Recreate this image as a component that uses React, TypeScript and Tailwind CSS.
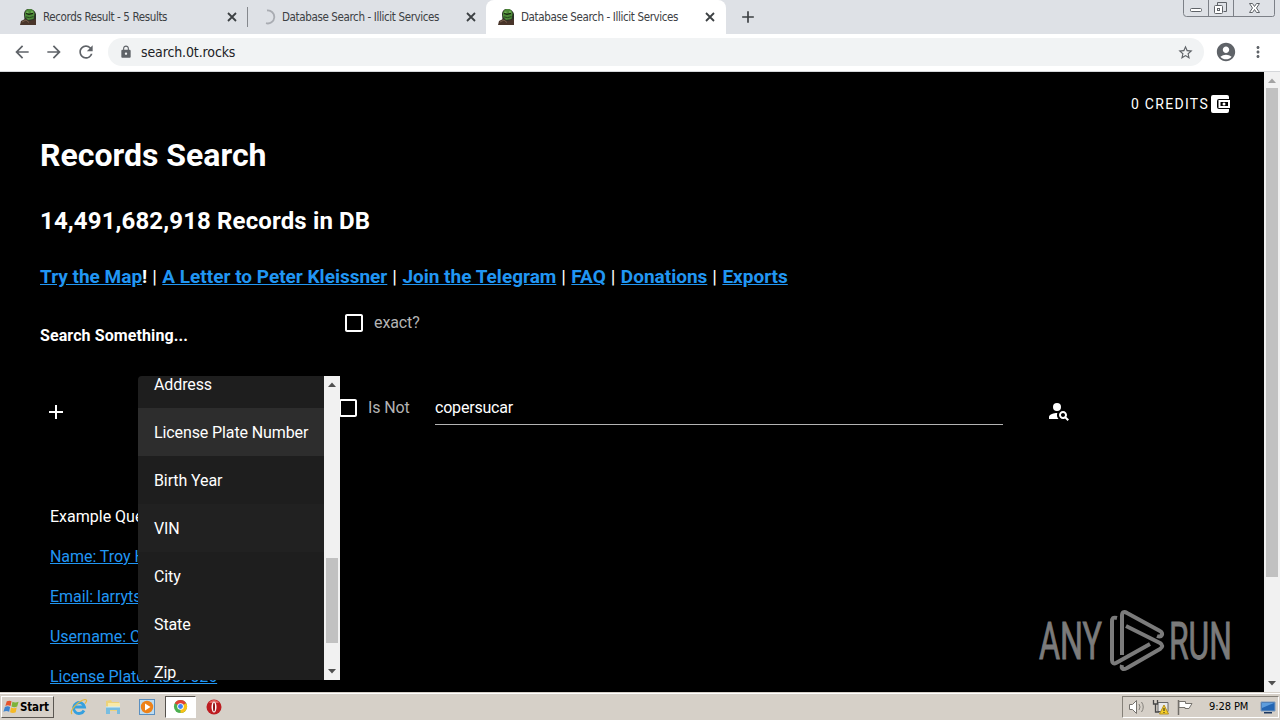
import React from 'react';
import {
    MdAccountCircle,
    MdAdd,
    MdArrowBack,
    MdArrowForward,
    MdCheckBoxOutlineBlank,
    MdLock,
    MdMoreVert,
    MdPersonSearch,
    MdRefresh,
    MdStarBorder,
} from 'react-icons/md';
import { clsx } from 'clsx';

const links = ['A Letter to Peter Kleissner', 'Join the Telegram', 'FAQ', 'Donations', 'Exports'];
const examples = ['Name: Troy H', 'Email: larryts', 'Username: C', 'License Plate: RJC7526'];
const fields = ['Address', 'License Plate Number', 'Birth Year', 'VIN', 'City', 'State', 'Zip'];

function FrogIcon() {
    return (
        <svg viewBox="0 0 16 16" className="h-4 w-4 shrink-0">
            <path d="M4 5.500C4 2 6 0 9 0c3.500 0 6 1.500 7 5v11H5z" fill="#2b3327" />
            <path d="M5 4.500C5 2 7 0 9.500 0c3 0 4.500 1.500 5 4.500L13.500 10 8 11 5 8z" fill="#4c8a38" />
            <path d="M6 4.500l3 .8 4-1" stroke="#17240f" strokeWidth="1.200" fill="none" />
            <path d="M6.500 3.200h2M11 3h2" stroke="#8bc66b" />
            <path d="M5.500 7.800l4 .8 4-1" stroke="#23451d" fill="none" />
            <path d="M0 16l1-4 4-2 4 2 7-2v6z" fill="#49352a" />
            <path d="M2 13l4-2 3 2.500" stroke="#79604c" fill="none" />
        </svg>
    );
}

function Spinner() {
    return (
        <svg viewBox="0 0 16 16" className="h-4 w-4 shrink-0" fill="none" stroke="#a9acb2" strokeWidth="1.800">
            <path d="M7 1.500a6.500 6.500 0 1 1-1 12.700" />
        </svg>
    );
}

function Tab({ title, active, loading }: { title: string; active?: boolean; loading?: boolean }) {
    return (
        <div
            className={clsx(
                'flex h-[34px] shrink-0 items-center pl-[12px]',
                !active && !loading && 'w-[239px] pr-[7px]',
                loading && 'w-[238px] pr-[7px]',
                active && 'w-[240px] rounded-t-lg bg-white pr-[8px]'
            )}
        >
            {loading ? <Spinner /> : <FrogIcon />}
            <span
                className={clsx(
                    "mt-[2px] flex-1 text-[11.500px] whitespace-nowrap tracking-[-0.370px] text-[#3c4043] [font-family:'DejaVu_Sans_Condensed','DejaVu_Sans',sans-serif] [font-stretch:condensed]",
                    loading ? 'ml-[6px]' : 'ml-[7px]'
                )}
            >
                {title}
            </span>
            <svg viewBox="0 0 14 14" className="mr-[1px] h-[14px] w-[14px]" stroke="#3c4043" strokeWidth="1.800">
                <path d="M3 3l8 8M11 3l-8 8" />
            </svg>
        </div>
    );
}

function WindowButtons() {
    return (
        <svg viewBox="0 0 94 18" className="h-[18px] w-[94px] shrink-0 self-start" fill="none">
            <path d="M.5 0v13.500a3 3 0 0 0 3 3h86a2 2 0 0 0 2-2V0M25.500 0v16M50.500 0v16" stroke="#7c8087" />
            <rect x="7.500" y="8.500" width="11" height="3" rx="1" fill="#fff" stroke="#5f6368" />
            <path d="M34.500 5.500v-3h9v9h-3" stroke="#5f6368" />
            <rect x="31.500" y="5.500" width="8" height="8" rx="1" fill="#fff" stroke="#5f6368" />
            <rect x="34.500" y="8.500" width="2" height="2" stroke="#5f6368" />
            <path
                d="M66.500 3.500h3l2 3 2-3h3l-3 4.500 3 4.500h-3l-2-3-2 3h-3l3-4.500z"
                fill="#fff"
                stroke="#5f6368"
            />
        </svg>
    );
}

function TabStrip() {
    return (
        <div className="flex h-[34px] items-center bg-[#dee1e6] pl-[8px]">
            <Tab title="Records Result - 5 Results" />
            <div className="h-5 w-px bg-[#85888d]" />
            <Tab title="Database Search - Illicit Services" loading />
            <Tab title="Database Search - Illicit Services" active />
            <MdAdd className="ml-[12px] h-[20px] w-[20px] text-[#3c4043]" />
            <div className="flex-1" />
            <WindowButtons />
            <div className="w-[3px]" />
        </div>
    );
}

function Toolbar() {
    return (
        <div className="flex h-[38px] items-center border-b border-[#d5d7da] bg-white pb-[1px] pl-[12px] text-[#5f6368]">
            <MdArrowBack className="h-5 w-5" />
            <MdArrowForward className="ml-[12px] h-5 w-5" />
            <MdRefresh className="ml-[12px] h-5 w-5" />
            <div className="ml-[12px] flex h-7 w-[1096px] items-center rounded-full bg-[#f1f3f4] pr-[10px] pl-[11px]">
                <MdLock className="h-[14px] w-[14px]" />
                <span className="ml-[8px] flex-1 text-[14px] tracking-[-0.120px] text-[#202124] [font-family:'DejaVu_Sans_Condensed','DejaVu_Sans',sans-serif] [font-stretch:condensed]">
                    search.0t.rocks
                </span>
                <MdStarBorder className="h-[17px] w-[17px]" />
            </div>
            <MdAccountCircle className="ml-[11px] h-[22px] w-[22px]" />
            <MdMoreVert className="ml-[12px] h-[18px] w-[18px]" />
        </div>
    );
}

function WalletIcon() {
    return (
        <svg viewBox="0 0 20 18" className="ml-[2px] h-[18px] w-5">
            <path
                d="M2 0h14a2 2 0 0 1 2 2v2H8a2 2 0 0 0-2 2v6a2 2 0 0 0 2 2h10v2a2 2 0 0 1-2 2H2a2 2 0 0 1-2-2V2a2 2 0 0 1 2-2z"
                fill="#fff"
            />
            <path d="M8.500 6h9.500v6H8.500z" fill="none" stroke="#fff" strokeWidth="2" />
            <circle cx="13" cy="9" r="1.500" fill="#fff" />
        </svg>
    );
}

function Arrow({ up, color }: { up?: boolean; color: string }) {
    return (
        <svg viewBox="0 0 16 16" className="h-4 w-4 shrink-0">
            <path d={up ? 'M4 11l4-4.500 4 4.500z' : 'M4 5l4 4.500L12 5z'} fill={color} />
        </svg>
    );
}

function FieldMenu() {
    return (
        <div className="absolute top-[304px] left-[138px] flex h-[304px] w-[202px] overflow-hidden rounded-l-[4px] bg-[#1e1e1e]">
            <div className="-mt-4 flex-1">
                {fields.map((field, i) => (
                    <div
                        key={field}
                        className={clsx(
                            'flex h-12 items-center pt-[2px] pl-4 text-[16px] tracking-[-0.110px] text-white',
                            i === 1 && 'bg-[#2d2d2d]',
                            i === 3 && 'bg-[#212121]'
                        )}
                    >
                        {field}
                    </div>
                ))}
            </div>
            <div className="flex w-4 flex-col bg-[#f1f1f1]">
                <Arrow up color="#505050" />
                <div className="mx-auto mt-[166px] h-[85px] w-3 bg-[#c1c1c1]" />
                <div className="flex-1" />
                <Arrow color="#505050" />
            </div>
        </div>
    );
}

function Watermark() {
    return (
        <svg viewBox="0 0 200 70" className="absolute top-[534px] left-[1035px] h-[70px] w-[200px]">
            <g fill="#7b7b7b" stroke="#7b7b7b" strokeWidth="0.900" fontSize="51" fontFamily="Roboto, sans-serif">
                <text x="4" y="53" textLength="63" lengthAdjust="spacingAndGlyphs">
                    ANY
                </text>
                <text x="134" y="53" textLength="63" lengthAdjust="spacingAndGlyphs">
                    RUN
                </text>
            </g>
            <g fill="none" stroke="#7b7b7b" strokeWidth="4" strokeLinejoin="round">
                <path d="M82 12c-4-1-5 0-5 4v38c0 3 2 4 4 3l34-19" />
                <path d="M87 49V10c0-4 2-5 5-3l33 18c4 2 2 7-3 5" />
                <path d="M91 20l34 17c3 2 3 4 0 6L92 62c-4 2-6 1-5-3" />
            </g>
        </svg>
    );
}

function Page() {
    return (
        <main className="relative flex h-[620px] overflow-hidden bg-black text-white [font-family:Roboto,sans-serif]">
            <div className="flex-1 pl-[40px]">
                <div className="flex h-16 items-center justify-end pr-[33px] text-[14px] tracking-[1.300px]">
                    0 CREDITS
                    <WalletIcon />
                </div>
                <h1 className="flex h-[38px] items-center text-[32px] font-bold">Records Search</h1>
                <h2 className="mt-[28px] flex h-[38px] items-center text-[24px] font-bold tracking-[0.130px]">
                    14,491,682,918 Records in DB
                </h2>
                <h3 className="mt-[24px] h-[26px] text-[19px] leading-[26px] font-bold whitespace-nowrap">
                    <a className="text-[#2196f3] underline">Try the Map</a>!
                    {links.map((link) => (
                        <React.Fragment key={link}>
                            <span className="font-normal tracking-[0.330px]"> | </span>
                            <a className="text-[#2196f3] underline">{link}</a>
                        </React.Fragment>
                    ))}
                </h3>
                <div className="flex h-[60px] pt-[21px]">
                    <b className="mt-[13px] h-6 w-[302px] text-[16px] leading-6 tracking-[0.100px]">
                        Search Something...
                    </b>
                    <MdCheckBoxOutlineBlank className="h-6 w-6" />
                    <span className="ml-[8px] text-[16px] leading-6 tracking-[-0.100px] text-[#b3b3b3]">exact?</span>
                </div>
                <div className="mt-[34px] flex h-[70px] pt-[12px]">
                    <MdAdd className="mt-[4px] ml-[4px] h-6 w-6" />
                    <MdCheckBoxOutlineBlank className="ml-[268px] h-6 w-6" />
                    <span className="ml-[8px] w-[67px] text-[16px] leading-6 tracking-[-0.100px] text-[#b3b3b3]">
                        Is Not
                    </span>
                    <div className="h-[29px] w-[568px] border-b border-[#b3b3b3] text-[16px] leading-6 tracking-[-0.200px]">
                        copersucar
                    </div>
                    <MdPersonSearch className="mt-[3px] ml-[44px] h-6 w-6" />
                </div>
                <div className="mt-[43px] ml-[10px] text-[16px] leading-10">
                    <p>Example Que</p>
                    {examples.map((example) => (
                        <p key={example}>
                            <a className="tracking-[-0.050px] text-[#2196f3] underline">{example}</a>
                        </p>
                    ))}
                </div>
            </div>
            <div className="flex w-4 flex-col bg-[#f1f1f1]">
                <Arrow up color="#a3a3a3" />
                <div className="mx-auto h-[489px] w-3 bg-[#c1c1c1]" />
                <div className="flex-1" />
                <Arrow color="#505050" />
            </div>
            <FieldMenu />
            <Watermark />
        </main>
    );
}

function StartFlag() {
    return (
        <svg viewBox="0 0 18 16" className="h-4 w-[17px] shrink-0">
            <path d="M4 2c2-1 4-1 5 0L8 7C6 6 4 6 2.500 7z" fill="#e5532b" />
            <path d="M10 2.500c2 1 4 1 6.500 0L15 7.500c-2 1-4 1-6 0z" fill="#7db33a" />
            <path d="M2 8c2-1 4-1 5.500 0l-1 5c-2-1-4-1-6 0z" fill="#3c83cf" />
            <path d="M8.500 8.500c2 1 4 1 6 0l-1 5c-2 1-4 1-6 0z" fill="#f5b925" />
        </svg>
    );
}

function IeIcon() {
    return (
        <svg viewBox="0 0 18 18" className="h-[18px] w-[18px]" fill="none">
            <path d="M14 12.500A5.500 5.500 0 1 1 14.500 9H5" stroke="#35a0df" strokeWidth="2.800" />
            <path d="M2 16C-1 13 8 3 15 1.500c3 0 1 3 0 4" stroke="#e4b83d" strokeWidth="1.200" />
        </svg>
    );
}

function FolderIcon() {
    return (
        <svg viewBox="0 0 18 18" className="h-[18px] w-[18px]">
            <path d="M2 3l5-1 1 2h7v9H2z" fill="#ecd27a" />
            <path d="M4 5h12v5H4z" fill="#f8e9a8" />
            <path d="M2 9h14v7h-3v-4H6v4H2z" fill="#78bde0" />
            <path d="M2 9h14" stroke="#d5effa" />
        </svg>
    );
}

function MediaIcon() {
    return (
        <svg viewBox="0 0 18 18" className="h-[18px] w-[18px]">
            <rect x="1.500" y="1.500" width="15" height="15" fill="#bcdcf2" stroke="#5a8fc0" />
            <circle cx="9" cy="9" r="6.200" fill="#ed8219" />
            <path d="M7 5.500l5.500 3.500L7 12.500z" fill="#fff" />
        </svg>
    );
}

function ChromeIcon() {
    return (
        <svg viewBox="0 0 16 16" className="h-[15px] w-[15px]">
            <circle cx="8" cy="8" r="7" fill="#4caf50" />
            <path d="M8 8L1.900 4.500A7 7 0 0 1 14.100 4.500z" fill="#e34133" />
            <path d="M8 8l6.100-3.500A7 7 0 0 1 8 15z" fill="#fbc116" />
            <circle cx="8" cy="8" r="3.500" fill="#fff" />
            <circle cx="8" cy="8" r="2.600" fill="#4285f4" />
        </svg>
    );
}

function OperaIcon() {
    return (
        <svg viewBox="0 0 16 16" className="h-4 w-4">
            <circle cx="8" cy="8" r="7.500" fill="#bd1c21" />
            <path d="M3 4c2-4 8-4 10 0z" fill="#e26360" />
            <ellipse cx="8" cy="8" rx="2.500" ry="5.500" fill="#fff" />
            <ellipse cx="8" cy="8" rx="1" ry="4.500" fill="#8e1116" />
        </svg>
    );
}

function Tray() {
    return (
        <div className="mr-[1px] flex h-[22px] w-[157px] items-center border border-t-[#858078] border-r-white border-b-white border-l-[#858078] pl-[6px]">
            <svg viewBox="0 0 66 18" className="h-[18px] w-[66px] shrink-0" fill="none">
                <path d="M.5 6.500h3l4-4v13l-4-4h-3z" fill="#fff" stroke="#76736e" />
                <path d="M10 6q2 3 0 6M12.500 4q3.500 5 0 10" stroke="#84817b" />
                <path d="M29 4.500h10v9H29z" fill="#e9e9e9" stroke="#696969" />
                <path d="M24.500 2v4h4V2M26.500 6v8h4" stroke="#474747" strokeWidth="1.300" />
                <path d="M35 7l4.500 9h-9z" fill="#f6cf27" stroke="#b6901e" />
                <path d="M35 10v3M35 14v1" stroke="#222" />
                <path d="M49.500 2v15" stroke="#706d68" strokeWidth="1.500" />
                <path d="M50 3.500h6.500v2H63l-3 5h-4v-1h-6z" fill="#fff" stroke="#76736e" />
            </svg>
            <span className="mt-[2px] ml-[14px] w-[42px] text-[11px] whitespace-nowrap tracking-[-0.080px] text-black [font-family:'DejaVu_Sans_Condensed','DejaVu_Sans',sans-serif] [font-stretch:condensed]">
                9:28 PM
            </span>
            <svg viewBox="0 0 16 16" className="ml-[9px] h-4 w-4 shrink-0">
                <path d="M1 3h14v9H1z" fill="#2466b3" stroke="#7d9abc" />
                <path d="M2 4h12L2 9z" fill="#5d9ddd" />
                <path d="M4 13h8v1.500H4z" fill="#1a3761" />
            </svg>
        </div>
    );
}

function Taskbar() {
    return (
        <div className="flex h-7 items-center border-t border-[#d6d0c8] bg-[#d6d0c8] pl-[1px] shadow-[inset_0_1px_0_#fff]">
            <button className="mt-[1px] flex h-[22px] w-[53px] items-center border border-t-white border-r-[#5b5752] border-b-[#5b5752] border-l-white pl-[1px] text-[11.500px] font-bold tracking-[-0.150px] text-black [font-family:'DejaVu_Sans_Condensed','DejaVu_Sans',sans-serif] [font-stretch:condensed]">
                <StartFlag />
                <span className="mt-[1px]">Start</span>
            </button>
            <div className="ml-[16px] flex items-center gap-[16px]">
                <IeIcon />
                <FolderIcon />
                <MediaIcon />
            </div>
            <div className="ml-[9px] flex h-[22px] w-[31px] items-center justify-center border border-t-[#55514c] border-r-white border-b-white border-l-[#55514c] bg-white">
                <ChromeIcon />
            </div>
            <div className="ml-[10px]">
                <OperaIcon />
            </div>
            <div className="flex-1" />
            <Tray />
        </div>
    );
}

export default function App() {
    return (
        <div className="flex h-[720px] w-[1280px] flex-col overflow-hidden">
            <TabStrip />
            <Toolbar />
            <Page />
            <Taskbar />
        </div>
    );
}
